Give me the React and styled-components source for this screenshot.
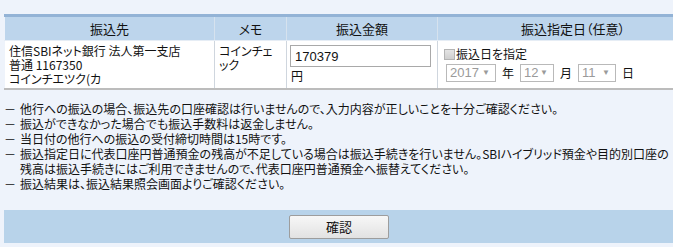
import React from "react";
import styled, { createGlobalStyle } from "styled-components";

const GlobalStyle = createGlobalStyle`
  html, body {
    margin: 0;
    padding: 0;
    background: #eef3fb;
    overflow: hidden;
  }
  body {
    font-family: "Noto Sans CJK JP", "Liberation Sans", sans-serif;
    font-size: 12px;
    color: #111;
    font-feature-settings: "palt";
  }
`;

const Page = styled.div`
  width: 700px;
  padding: 14px 0 0 4px;
`;

const Table = styled.table`
  width: 700px;
  border-collapse: collapse;
  table-layout: fixed;
  border-top: 3px solid #93b3d6;
  border-bottom: 2px solid #bcbcbc;
`;

const Th = styled.th`
  width: ${(p) => p.$w}px;
  height: 23px;
  padding: 0;
  background: #bdd5ec;
  border-left: 1px solid ${(p) => (p.$first ? "transparent" : "#d6e2ee")};
  border-bottom: 1px solid #e6edf5;
  font-size: 13px;
  font-weight: normal;
  color: #111;
  text-align: center;
  vertical-align: middle;
  line-height: 23px;
`;

const Td = styled.td`
  background: #fff;
  padding: 3px ${(p) => p.$pr || 4}px 2px 4px;
  border-left: 1px solid ${(p) => (p.$first ? "transparent" : "#cfd6de")};
  vertical-align: top;
  line-height: 14px;
  font-size: 12px;
`;

const AmountInput = styled.input`
  display: block;
  box-sizing: border-box;
  width: 141px;
  height: 22px;
  margin: 1px 0 0 -1px;
  padding: 0 4px;
  border: 1px solid #a9a9a9;
  font-family: "Liberation Sans", sans-serif;
  font-size: 13px;
  color: #111;
  background: #fff;
`;

const Yen = styled.div`
  margin-top: 2px;
`;

const CheckRow = styled.label`
  display: flex;
  align-items: center;
  margin: 3px 0 0 2px;
  height: 14px;
`;

const CheckBox = styled.span`
  box-sizing: border-box;
  width: 11px;
  height: 11px;
  border: 1px solid #b4b4b4;
  background: linear-gradient(#e4e4e4, #cfcfcf);
  margin-right: 1px;
`;

const DateRow = styled.div`
  display: flex;
  align-items: center;
  gap: 6px;
  margin: 3px 0 0 4px;
`;

const SelectBox = styled.div`
  box-sizing: border-box;
  width: ${(p) => p.$w}px;
  height: 18px;
  display: flex;
  align-items: center;
  justify-content: space-between;
  padding: 0 5px 0 3px;
  border: 1px solid #b9b9b9;
  background: #fff;
  color: #9a9a9a;
  font-family: "Liberation Sans", sans-serif;
  font-size: 13px;
  span {
    font-size: 8px;
    color: #9a9a9a;
  }
`;

const Notes = styled.ul`
  list-style: none;
  margin: 0;
  padding: 11px 0 0;
  width: 674px;
  height: 109px;
  line-height: 15px;
  font-size: 12px;
`;

const Note = styled.li`
  padding-left: 16px;
  text-indent: -16px;
  &::before {
    content: "－";
    display: inline-block;
    width: 16px;
    text-indent: 0;
  }
`;

const ButtonBar = styled.div`
  width: 700px;
  height: 33px;
  background: #b8d3ea;
  display: flex;
  align-items: center;
  padding-left: 285px;
  box-sizing: border-box;
`;

const ConfirmButton = styled.button`
  width: 100px;
  height: 24px;
  border: 1px solid #9d9d9d;
  border-radius: 2px;
  background: linear-gradient(#f7f7f7, #e2e2e2);
  font-family: "Noto Sans CJK JP", sans-serif;
  font-size: 13px;
  color: #111;
  padding: 0;
`;

const notes = [
  "他行への振込の場合、振込先の口座確認は行いませんので、入力内容が正しいことを十分ご確認ください。",
  "振込ができなかった場合でも振込手数料は返金しません。",
  "当日付の他行への振込の受付締切時間は15時です。",
  "振込指定日に代表口座円普通預金の残高が不足している場合は振込手続きを行いません。SBIハイブリッド預金や目的別口座の残高は振込手続きにはご利用できませんので、代表口座円普通預金へ振替えてください。",
  "振込結果は、振込結果照会画面よりご確認ください。",
];

export default function App() {
  return (
    <Page>
      <GlobalStyle />
      <Table>
        <thead>
          <tr>
            <Th $w={209} $first>振込先</Th>
            <Th $w={71}>メモ</Th>
            <Th $w={150}>振込金額</Th>
            <Th $w={270}>振込指定日（任意）</Th>
          </tr>
        </thead>
        <tbody>
          <tr>
            <Td $first>
              住信SBIネット銀行 法人第一支店
              <br />
              普通 1167350
              <br />
              コインチエツク(カ
            </Td>
            <Td $pr={12}>コインチェック</Td>
            <Td>
              <AmountInput defaultValue="170379" />
              <Yen>円</Yen>
            </Td>
            <Td>
              <CheckRow>
                <CheckBox />
                振込日を指定
              </CheckRow>
              <DateRow>
                <SelectBox $w={50}>
                  2017<span>▼</span>
                </SelectBox>
                年
                <SelectBox $w={34}>
                  12<span>▼</span>
                </SelectBox>
                月
                <SelectBox $w={38}>
                  11<span>▼</span>
                </SelectBox>
                日
              </DateRow>
            </Td>
          </tr>
        </tbody>
      </Table>
      <Notes>
        {notes.map((n) => (
          <Note key={n}>{n}</Note>
        ))}
      </Notes>
      <ButtonBar>
        <ConfirmButton>確認</ConfirmButton>
      </ButtonBar>
    </Page>
  );
}
